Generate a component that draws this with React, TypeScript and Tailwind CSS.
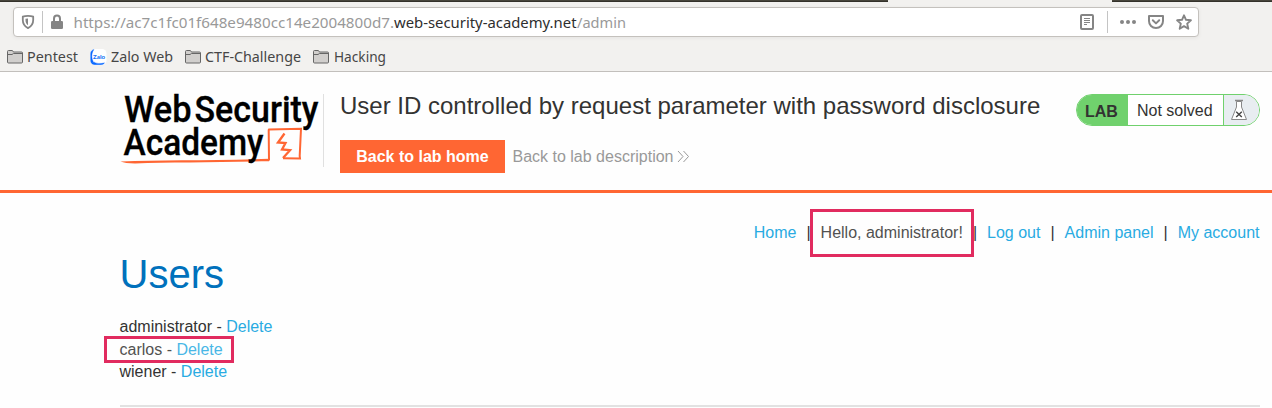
import React from 'react';

const Folder = () => (
  <svg width="16" height="16" viewBox="0 0 16 16" className="block shrink-0" fill="#d1cfcd" stroke="#666" strokeWidth="1">
    <path d="M.5 12V2.5Q.5 1.5 1.5 1.5H5Q5.7 1.5 6 2.2L6.4 3H14.5Q15.5 3 15.5 4V13Q15.5 14 14.5 14H1.5Q.5 14 .5 13Z" />
    <path d="M.5 5.5H5L6.5 4.5H15.5" fill="none" />
  </svg>
);

const Zalo = () => (
  <svg width="17" height="16" viewBox="0 0 17 16" className="block shrink-0">
    <rect x=".5" y="0" width="16" height="16" rx="4.5" fill="#fff" />
    <path d="M4 .4C1.5 1 .6 2.6.6 5V11C.6 14.5 2.5 15.7 6 15.7H11Q13.7 15.6 14.6 13.8C10 15 6 14.4 4 12.9L2.5 13.4Q3.6 13 3 12C1.2 8 1.7 3.5 4 .4Z" fill="#0a68ff" stroke="#0a68ff" strokeWidth=".3" />
    <text x="3" y="9.7" fontFamily="Lato, sans-serif" fontWeight="900" fontSize="6.2" textLength="12" lengthAdjust="spacingAndGlyphs" fill="#1773f5">Zalo</text>
  </svg>
);

const UI = ({ x, baseline = 15, width, fill, children }: { x: number; baseline?: number; width: number; fill: string; children: string }) => (
  <text x={x} y={baseline} textLength={width} lengthAdjust="spacingAndGlyphs" fill={fill}>{children}</text>
);

const Label = ({ width, className = '', children }: { width: number; className?: string; children: string }) => (
  <svg width={width} height="20" className={'block shrink-0 overflow-visible font-["Noto_Sans",sans-serif] text-[14.3px] ' + className}>
    <UI x={0} width={width} fill="#464646">{children}</UI>
  </svg>
);

function AddressBar() {
  return (
    <div className="ml-[13px] flex h-[30px] w-[1186px] items-center rounded-[4px] border border-[#c4c1bd] bg-white shadow-[0_1px_4px_rgba(0,0,0,0.06)]">
      <svg width="14" height="16" viewBox="0 0 14 16" className="ml-[7px] block shrink-0" fill="none" stroke="#858585">
        <path d="M7 1.8C9 1.8 11 2.2 12.2 2.7V6C12.2 10 10 12.6 7 14.1C4 12.6 1.8 10 1.8 6V2.7C3 2.2 5 1.8 7 1.8Z" strokeWidth="1.8" strokeLinejoin="round" />
        <path d="M7 4.5V11.3C5.2 10 4.5 8.4 4.5 6V4.8Z" fill="#858585" stroke="none" />
      </svg>
      <div className="ml-[7px] h-[22px] w-px bg-[#c4c4c4]" />
      <svg width="14" height="16" viewBox="0 0 14 16" className="ml-[7px] block shrink-0">
        <path d="M4 8V4.7C4 .5 10 .5 10 4.7V8" fill="none" stroke="#858585" strokeWidth="2" />
        <rect x="1" y="7" width="12" height="8" rx="1.3" fill="#858585" />
      </svg>
      <svg width="560" height="22" className="ml-[9px] block shrink-0 font-['Noto_Sans',sans-serif] text-[14.9px]">
        <UI x={0.5} baseline={16.5} width={320.5} fill="#999">https://ac7c1fc01f648e9480cc14e2004800d7.</UI>
        <UI x={321} baseline={16.5} width={182.5} fill="#2e2e2e">web-security-academy.net</UI>
        <UI x={504} baseline={16.5} width={49} fill="#999">/admin</UI>
      </svg>
      <div className="ml-auto mr-[6px] flex items-center">
        <svg width="14" height="16" viewBox="0 0 14 16" className="block" fill="none" stroke="#858585">
          <rect x="1" y="1" width="12" height="14" rx="1" strokeWidth="2" />
          <path d="M4 4.5H10M4 6.5H10M4 8.5H10M4 10.5H7" strokeWidth="1" />
        </svg>
        <div className="ml-[13px] h-[22px] w-px bg-[#c4c4c4]" />
        <svg width="16" height="16" viewBox="0 0 16 16" className="ml-[12px] block" fill="#858585">
          <circle cx="2" cy="8" r="2" /><circle cx="8" cy="8" r="2" /><circle cx="14" cy="8" r="2" />
        </svg>
        <svg width="16" height="16" viewBox="0 0 16 16" className="ml-[12px] block" fill="none" stroke="#858585" strokeWidth="2" strokeLinejoin="round">
          <path d="M1 2H15V7C15 11 12 14 8 14C4 14 1 11 1 7Z" />
          <path d="M4.8 6.3L8 9.4L11.2 6.3" strokeLinecap="round" />
        </svg>
        <svg width="16" height="16" viewBox="0 0 16 16" className="ml-[12px] block" fill="none" stroke="#858585" strokeWidth="1.9" strokeLinejoin="round">
          <path d="M8 1.3L10 5.8L14.9 6.3L11.2 9.6L12.3 14.7L8 12.1L3.7 14.7L4.8 9.6L1.1 6.3L6 5.8Z" />
        </svg>
      </div>
    </div>
  );
}

function Browser() {
  return (
    <div className="flex h-[72px] flex-col border-b border-[#c2bfbc] bg-[#f2f1ef]">
      <div className="flex h-[2px] shrink-0 justify-between">
        <div className="w-[888px] border-b border-[#34322b] bg-[#47453c]" />
        <div className="w-[160px] border-b border-[#34322b] bg-[#47453c]" />
      </div>
      <div className="h-[5px] shrink-0" />
      <AddressBar />
      <div className="ml-[7px] mt-[10px] flex h-5 items-center">
        <Folder />
        <Label width={51} className="ml-[4px]">Pentest</Label>
        <div className="ml-[12px]"><Zalo /></div>
        <Label width={62} className="ml-[4px]">Zalo Web</Label>
        <div className="ml-[12px]"><Folder /></div>
        <Label width={96} className="ml-[4px]">CTF-Challenge</Label>
        <div className="ml-[12px]"><Folder /></div>
        <Label width={52} className="ml-[5px]">Hacking</Label>
      </div>
    </div>
  );
}

const Logo = () => (
  <svg width="203" height="76" viewBox="0 0 203 76" className="block shrink-0 overflow-visible" fontFamily="Roboto, sans-serif" fontWeight="500">
    <path d="M.5 67.5C40 65.6 90 67 149 64.8V67.3C95 68.2 50 68.4 15 69.4Q5 69.4 .5 67.5Z" fill="#ff6633" />
    <path d="M149 66.5L148.7 36L149 35.5L181 34.8L179.7 62L180 64.5L163 64.2" fill="none" stroke="#ff6633" strokeWidth="2" />
    <path d="M164.5 39.5L158 48.5L165.5 49L162 55.5L170 56.2L163 64" fill="none" stroke="#ff6633" strokeWidth="2.3" />
    <g fill="#000" stroke="#000" strokeWidth=".3" fontSize="36.5">
      <text x="4" y="28" textLength="67.5" lengthAdjust="spacingAndGlyphs">Web</text>
      <text x="74.5" y="28" textLength="124" lengthAdjust="spacingAndGlyphs">Security</text>
      <text x="3.5" y="60.6" textLength="140" lengthAdjust="spacingAndGlyphs">Academy</text>
    </g>
  </svg>
);

function Status() {
  return (
    <div className="mt-[22px] flex h-8 w-[184px] shrink-0 overflow-hidden rounded-full border border-[#70d16d] bg-white text-[16px] leading-[32px]">
      <div className="w-[51px] bg-[#70d16d] pl-[8px] font-bold leading-[33px]">LAB</div>
      <div className="w-[95px] pl-[9px] leading-[31px]">Not solved</div>
      <div className="flex flex-1 border-l border-[#70d16d] bg-[#e8edf1]">
        <svg width="18" height="22" viewBox="0 0 18 22" className="ml-[6px] mt-[4px] block" fill="#fff" stroke="#888" strokeWidth="1">
          <path d="M6.5 2.5V8L1.5 20.5H16.5L11.5 8V2.5Z" />
          <path d="M5 1.5H13" strokeWidth="1.5" />
          <path d="M6.2 12.7L11.8 18M11.8 12.7L6.2 18" stroke="#444" strokeWidth="1.4" />
        </svg>
      </div>
    </div>
  );
}

function Header() {
  return (
    <header className="h-[121px] border-b-[3px] border-[#ff6633]">
      <div className="ml-[120px] flex w-[1140px]">
        <div className="mt-[22px] flex h-[73px] w-[204px] border-r border-[#e0e0e0]"><Logo /></div>
        <div className="ml-[16px] flex-1">
          <h2 className="mt-[17px] h-[34px] whitespace-nowrap text-[24px] leading-[34px]">User ID controlled by request parameter with password disclosure</h2>
          <div className="mt-[17px] flex h-[33px] items-center">
            <div className="h-[33px] w-[165px] bg-[#ff6633] text-center font-bold leading-[33px] text-white">Back to lab home</div>
            <div className="ml-[7.5px] whitespace-nowrap leading-[33px] text-[#999]">Back to lab description</div>
            <svg width="13" height="13" viewBox="0 0 13 13" className="ml-[4px] block" fill="none" stroke="#999">
              <path d="M1 1L6 6.5L1 12M6.5 1L11.5 6.5L6.5 12" />
            </svg>
          </div>
        </div>
        <Status />
      </div>
    </header>
  );
}

const Link = ({ children }: { children: string }) => <a className="text-[#29abe2]">{children}</a>;

export default function App() {
  return (
    <div className="relative h-[408px] w-[1272px] overflow-hidden bg-[#fefefe] font-['Liberation_Sans',Arial,sans-serif] text-[16px] text-[#333332]">
      <Browser />
      <Header />
      <main className="ml-[119.5px] w-[1140px]">
        <nav className="flex justify-end gap-[10px] whitespace-nowrap pt-[29px] leading-[22px]">
          <Link>Home</Link><span>|</span>
          <span>Hello, administrator!</span><span>|</span>
          <Link>Log out</Link><span>|</span>
          <Link>Admin panel</Link><span>|</span>
          <Link>My account</Link>
        </nav>
        <h1 className="mt-[6px] h-[48px] text-[40px] leading-[48px] text-[#0071bc]">Users</h1>
        <div className="mt-[18px] h-[67.2px] leading-[22.4px]">
          <div>administrator - <Link>Delete</Link></div>
          <div className="pt-[0.5px]">carlos - <Link>Delete</Link></div>
          <div className="-mt-[0.5px]">wiener - <Link>Delete</Link></div>
        </div>
        <div className="mt-[21.8px] h-[2px] bg-[#e2e2e2]" />
      </main>
      <div className="absolute left-[810px] top-[209px] h-[48px] w-[164px] border-[3px] border-[#e12b5f] bg-white/15" />
      <div className="absolute left-[104px] top-[336px] h-[27px] w-[130px] border-[3px] border-[#e12b5f] bg-white/15" />
    </div>
  );
}
